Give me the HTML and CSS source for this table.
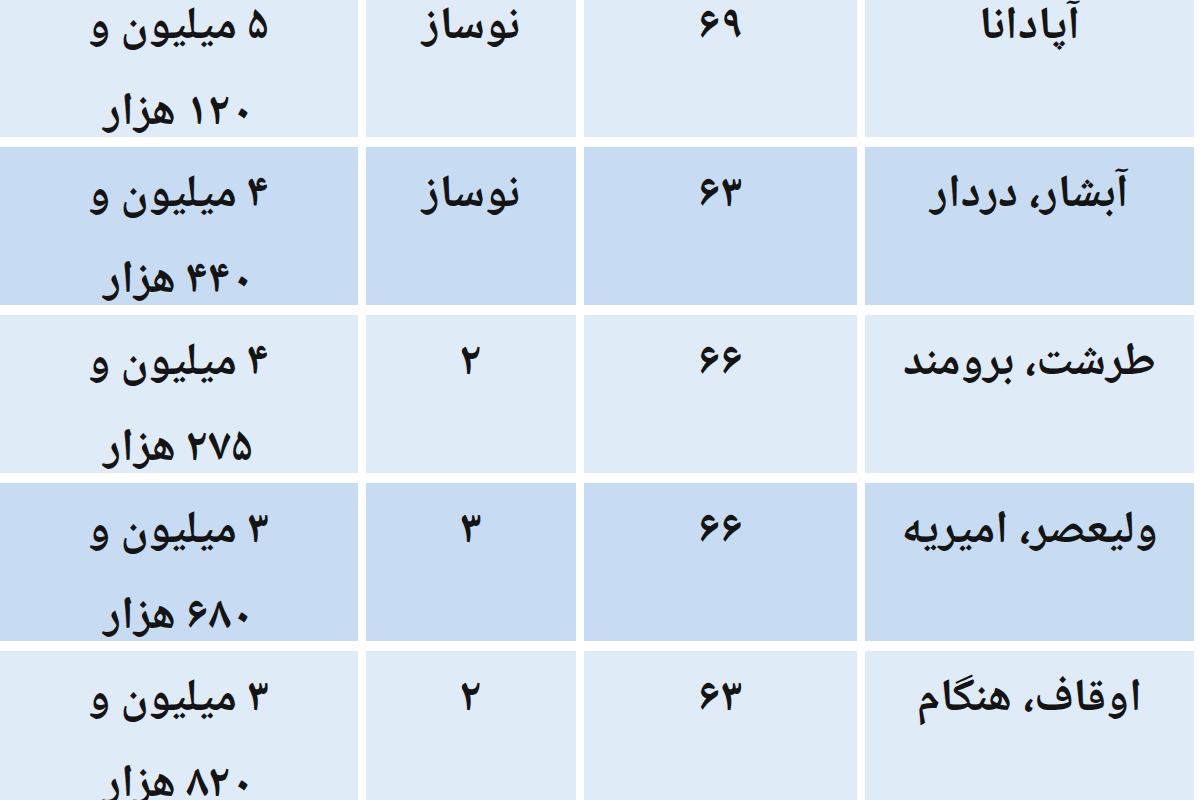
FILE: index.html
```html
<!DOCTYPE html>
<html lang="fa" dir="rtl">
<head>
<meta charset="utf-8">
<title>جدول قیمت</title>
<link rel="stylesheet" href="styles.css">
</head>
<body>
<div class="table">
  <div class="row light">
    <div class="cell c-area">آپادانا</div>
    <div class="cell c-size">۶۹</div>
    <div class="cell c-age">نوساز</div>
    <div class="cell c-price">۵ میلیون و<br>۱۲۰ هزار</div>
  </div>
  <div class="row dark">
    <div class="cell c-area">آبشار، دردار</div>
    <div class="cell c-size">۶۳</div>
    <div class="cell c-age">نوساز</div>
    <div class="cell c-price">۴ میلیون و<br>۴۴۰ هزار</div>
  </div>
  <div class="row light">
    <div class="cell c-area">طرشت، برومند</div>
    <div class="cell c-size">۶۶</div>
    <div class="cell c-age">۲</div>
    <div class="cell c-price">۴ میلیون و<br>۲۷۵ هزار</div>
  </div>
  <div class="row dark">
    <div class="cell c-area">ولیعصر، امیریه</div>
    <div class="cell c-size">۶۶</div>
    <div class="cell c-age">۳</div>
    <div class="cell c-price">۳ میلیون و<br>۶۸۰ هزار</div>
  </div>
  <div class="row light">
    <div class="cell c-area">اوقاف، هنگام</div>
    <div class="cell c-size">۶۳</div>
    <div class="cell c-age">۲</div>
    <div class="cell c-price">۳ میلیون و<br>۸۲۰ هزار</div>
  </div>
</div>
</body>
</html>
```
FILE: styles.css
```css
html, body {
  margin: 0;
  padding: 0;
  background: #ffffff;
  width: 1200px;
  height: 800px;
  overflow: hidden;
}

body {
  font-family: "Noto Naskh Arabic", "Noto Sans Arabic", "DejaVu Sans", sans-serif;
  font-weight: bold;
  color: #141414;
}

.table {
  display: flex;
  flex-direction: column;
  gap: 10px;
  margin-top: -21px;
  padding-right: 6px;
}

.row {
  display: grid;
  grid-template-columns: 329px 273px 210px 359px;
  grid-template-rows: 158px;
  column-gap: 8px;
  height: 158px;
}

.cell {
  text-align: center;
  font-size: 46px;
  line-height: 86px;
  padding-top: 6px;
  box-sizing: border-box;
  overflow: visible;
}

.light .cell {
  background: #e0ebf8;
}

.dark .cell {
  background: #c7dcf3;
}
```
